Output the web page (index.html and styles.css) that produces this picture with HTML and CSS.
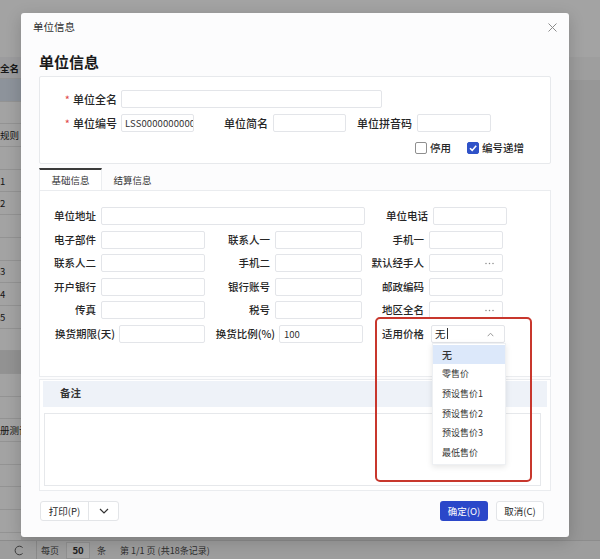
FILE: index.html
```html
<!DOCTYPE html>
<html lang="zh-CN">
<head>
<meta charset="utf-8">
<title>单位信息</title>
<link rel="stylesheet" href="styles.css">
</head>
<body>
<div class="page">
  <div class="toolbar"></div>
  <div class="table">
    <div class="fixed-col">
      <div class="th"><span class="cell">全名</span></div>
      <div class="tr sel"></div>
      <div class="tr"></div>
      <div class="tr"><span class="cell">规则</span></div>
      <div class="tr"></div>
      <div class="tr"><span class="cell">1</span></div>
      <div class="tr"><span class="cell">2</span></div>
      <div class="tr"></div>
      <div class="tr"></div>
      <div class="tr"><span class="cell">3</span></div>
      <div class="tr"><span class="cell">4</span></div>
      <div class="tr"><span class="cell">5</span></div>
      <div class="tr"></div>
      <div class="tr hover"></div>
      <div class="tr"></div>
      <div class="tr"></div>
      <div class="tr"><span class="cell">册测试</span></div>
      <div class="tr"></div>
      <div class="tr"></div>
      <div class="tr"></div>
      <div class="tr"></div>
    </div>
    <div class="rest"><div class="rest-head"></div></div>
  </div>
  <div class="pager">
    <svg class="refresh" width="10" height="11" viewBox="0 0 10 11"><path d="M8.6 2.6A4.3 4.3 0 1 0 8.6 8.4" fill="none" stroke="#5a5a5a" stroke-width="1"/></svg>
    <span class="pg-sep"></span>
    <span class="pg-text">每页</span>
    <span class="pg-size">50</span>
    <span class="pg-text pg-unit">条</span>
    <span class="pg-info">第 1/1 页 (共18条记录)</span>
  </div>
</div>

<div class="mask"></div>

<div class="dialog">
  <div class="dlg-head">
    <span class="dlg-title">单位信息</span>
    <svg class="close" width="9" height="9" viewBox="0 0 9 9"><path d="M0.5 0.5L8.5 8.5M8.5 0.5L0.5 8.5" stroke="#8c8c8c" stroke-width="1"/></svg>
  </div>
  <div class="dlg-body">
    <h1 class="heading">单位信息</h1>

    <div class="card">
      <div class="crow">
        <label class="lb big w77 tight"><span class="req">*</span>单位全名</label>
        <div class="inp w261"></div>
      </div>
      <div class="crow">
        <label class="lb big w77 tight"><span class="req">*</span>单位编号</label>
        <div class="inp w73 code">LSS0000000000</div>
        <label class="lb big w74">单位简名</label>
        <div class="inp w73"></div>
        <label class="lb big w66">单位拼音码</label>
        <div class="inp w74"></div>
      </div>
      <div class="checks">
        <span class="chk"><span class="box"></span>停用</span>
        <span class="chk"><span class="box on"><svg width="10" height="10" viewBox="0 0 10 10"><path d="M2 5.2L4.2 7.4L8.2 2.8" fill="none" stroke="#fff" stroke-width="1.6"/></svg></span>编号递增</span>
      </div>
    </div>

    <div class="tabs">
      <div class="tab active">基础信息</div>
      <div class="tab t2">结算信息</div>
    </div>

    <div class="panel">
      <div class="frow">
        <label class="lb w56">单位地址</label>
        <div class="inp w264"></div>
        <label class="lb w63">单位电话</label>
        <div class="inp w74"></div>
      </div>
      <div class="frow">
        <label class="lb w56">电子部件</label>
        <div class="inp w104"></div>
        <label class="lb w65">联系人一</label>
        <div class="inp w87"></div>
        <label class="lb w62">手机一</label>
        <div class="inp w74"></div>
      </div>
      <div class="frow">
        <label class="lb w56">联系人二</label>
        <div class="inp w104"></div>
        <label class="lb w65">手机二</label>
        <div class="inp w87"></div>
        <label class="lb w62">默认经手人</label>
        <div class="inp w74 pick"><svg class="dots" width="9" height="3" viewBox="0 0 9 3"><circle cx="1" cy="1.5" r="0.75" fill="#8a8a8a"/><circle cx="4.5" cy="1.5" r="0.75" fill="#8a8a8a"/><circle cx="8" cy="1.5" r="0.75" fill="#8a8a8a"/></svg></div>
      </div>
      <div class="frow">
        <label class="lb w56">开户银行</label>
        <div class="inp w104"></div>
        <label class="lb w65">银行账号</label>
        <div class="inp w87"></div>
        <label class="lb w62">邮政编码</label>
        <div class="inp w74"></div>
      </div>
      <div class="frow">
        <label class="lb w56">传真</label>
        <div class="inp w104"></div>
        <label class="lb w65">税号</label>
        <div class="inp w87"></div>
        <label class="lb w62">地区全名</label>
        <div class="inp w74 pick"><svg class="dots" width="9" height="3" viewBox="0 0 9 3"><circle cx="1" cy="1.5" r="0.75" fill="#8a8a8a"/><circle cx="4.5" cy="1.5" r="0.75" fill="#8a8a8a"/><circle cx="8" cy="1.5" r="0.75" fill="#8a8a8a"/></svg></div>
      </div>
      <div class="frow">
        <label class="lb w75 tight">换货期限(天)</label>
        <div class="inp w86"></div>
        <label class="lb w70 tight">换货比例(%)</label>
        <div class="inp w84 num">100</div>
        <label class="lb w61 wide">适用价格</label>
        <div class="select w74">
          <span class="sel-val">无</span><span class="caret-line"></span>
          <svg class="chev" width="7" height="5" viewBox="0 0 7 5"><path d="M0.7 4.2L3.5 1.2L6.3 4.2" fill="none" stroke="#9a9a9a" stroke-width="1"/></svg>
          <div class="menu">
            <div class="mi on">无</div>
            <div class="mi">零售价</div>
            <div class="mi">预设售价1</div>
            <div class="mi">预设售价2</div>
            <div class="mi">预设售价3</div>
            <div class="mi">最低售价</div>
          </div>
        </div>
      </div>
    </div>

    <div class="remark">
      <div class="remark-head">备注</div>
      <div class="remark-area"></div>
    </div>

    <div class="foot">
      <div class="btn-group">
        <span class="btn print">打印(P)</span>
        <span class="btn more"><svg width="10" height="6" viewBox="0 0 10 6"><path d="M1 1L5 5L9 1" fill="none" stroke="#333" stroke-width="1.2"/></svg></span>
      </div>
      <div class="actions">
        <span class="btn ok">确定(O)</span>
        <span class="btn cancel">取消(C)</span>
      </div>
    </div>
  </div>
  <div class="annot"></div>
</div>
</body>
</html>
```

FILE: styles.css
```css
* { box-sizing: border-box; margin: 0; padding: 0; }
html, body { width: 600px; height: 559px; overflow: hidden; }
body {
  position: relative;
  background: #fff;
  color: #262626;
  font-family: "Noto Sans CJK SC", "Noto Sans", sans-serif;
  font-size: 11px;
}

/* ---------- underlying page ---------- */
.page {
  display: grid;
  grid-template-rows: 57px 1fr 19px;
  height: 559px;
}
.toolbar { background: #fff; }
.table { display: flex; min-height: 0; overflow: hidden; }
.fixed-col {
  width: 21px;
  display: flex;
  flex-direction: column;
  background: #fff;
  flex: none;
}
.th {
  height: 22px;
  flex: none;
  background: #f4f5f7;
  display: flex;
  align-items: center;
  font-weight: 700;
  font-size: 9.5px;
  border-bottom: 1px solid #e3e3e3;
}
.tr {
  height: 22.7px;
  flex: none;
  display: flex;
  align-items: center;
  font-size: 9.5px;
  border-bottom: 1px solid #e6e6e6;
}
.tr.sel { background: #dde6f3; }
.tr.hover { background: #e4e4e4; }
.cell { white-space: nowrap; line-height: 12px; }
.rest { flex: 1; background: #ececec; }
.rest-head { height: 23px; background: #f7f7f7; }

.pager {
  display: flex;
  align-items: center;
  padding-left: 14px;
  background: #f6f6f6;
  border-top: 1px solid #dcdcdc;
  font-size: 9px;
  color: #4a4a4a;
}
.refresh { flex: none; }
.pg-sep { width: 1px; height: 19px; background: #d8d8d8; margin-left: 12px; }
.pg-text { margin-left: 4px; }
.pg-size {
  margin-left: 7px;
  width: 24px;
  height: 17px;
  background: #fff;
  border: 1px solid #e2e2e2;
  text-align: center;
  line-height: 15px;
  font-weight: 700;
  font-size: 9.5px;
  color: #333;
}
.pg-unit { margin-left: 7px; }
.pg-info { margin-left: 14px; }

.mask {
  position: absolute;
  inset: 0;
  background: rgba(0, 0, 0, 0.36);
}

/* ---------- dialog ---------- */
.dialog {
  position: absolute;
  left: 21px;
  top: 13px;
  width: 548px;
  height: 524px;
  background: #fcfcfd;
  border-radius: 3px;
  box-shadow: 0 4px 16px rgba(0, 0, 0, 0.18);
  display: flex;
  flex-direction: column;
}
.dlg-head {
  height: 26px;
  padding: 0 12px;
  display: flex;
  align-items: center;
  justify-content: space-between;
  flex: none;
}
.dlg-title { font-size: 10.5px; color: #333; }
.close { margin-top: 3px; }

.dlg-body {
  flex: 1;
  padding: 0 18px;
  display: flex;
  flex-direction: column;
}
.heading {
  font-size: 15px;
  font-weight: 700;
  line-height: 22px;
  margin-top: 12px;
  color: #1a1a1a;
}

.card {
  margin-top: 3px;
  height: 88px;
  border: 1px solid #e7e9ec;
  border-radius: 2px;
  background: #fff;
  padding-top: 13px;
  flex: none;
}
.crow {
  display: flex;
  align-items: center;
  height: 18px;
}
.crow + .crow { margin-top: 6px; }

.lb {
  flex: none;
  text-align: right;
  white-space: nowrap;
  font-size: 10.5px;
  font-weight: 500;
  line-height: 18px;
  margin-right: 5px;
  color: #262626;
}
.lb.big { font-size: 11px; }
.lb.tight { margin-right: 4px; }
.lb.wide { margin-right: 7px; }
.req { color: #e04646; margin-right: 3px; font-weight: 400; }

.inp {
  flex: none;
  height: 18px;
  border: 1px solid #e3e5e9;
  border-radius: 2px;
  background: #fff;
  overflow: hidden;
  white-space: nowrap;
  font-size: 9.5px;
  line-height: 16px;
  padding-left: 3px;
  color: #333;
}
.inp.code { font-size: 9.5px; letter-spacing: 0.1px; }
.inp.num { padding-left: 4px; }
.inp.pick { display: flex; justify-content: flex-end; align-items: center; padding-right: 8px; }
.dots { flex: none; }

.w56 { width: 56px; }
.w61 { width: 61px; }
.w62 { width: 62px; }
.w63 { width: 63px; }
.w65 { width: 65px; }
.w66 { width: 66px; }
.w70 { width: 70px; }
.w73 { width: 73px; }
.w74 { width: 74px; }
.w75 { width: 75px; }
.w77 { width: 77px; }
.w84 { width: 84px; }
.w86 { width: 86px; }
.w87 { width: 87px; }
.w104 { width: 104px; }
.w261 { width: 261px; }
.w264 { width: 264px; }

.checks {
  margin-top: 10px;
  height: 12px;
  display: flex;
  justify-content: flex-end;
  align-items: center;
  gap: 16px;
  padding-right: 26px;
}
.chk {
  display: flex;
  align-items: center;
  gap: 3px;
  font-size: 10.5px;
  font-weight: 500;
  line-height: 12px;
}
.box {
  width: 12px;
  height: 12px;
  border: 1px solid #8f8f8f;
  border-radius: 2px;
  background: #fff;
  display: flex;
  align-items: center;
  justify-content: center;
}
.box.on { background: #2f52c8; border-color: #2f52c8; }

.tabs {
  height: 26px;
  padding-top: 4px;
  display: flex;
  flex: none;
}
.tab {
  width: 63px;
  height: 22px;
  text-align: center;
  font-size: 9.5px;
  line-height: 20px;
  color: #333;
  border-top: 2px solid transparent;
}
.tab.active {
  background: #fff;
  border-top-color: #3b3b3b;
  border-left: 1px solid #ebedf0;
  border-right: 1px solid #ebedf0;
}
.tab.t2 { width: 61px; }

.panel {
  height: 187px;
  border: 1px solid #eaecef;
  background: #fff;
  padding-top: 16px;
  display: flex;
  flex-direction: column;
  gap: 5.5px;
  flex: none;
}
.frow {
  display: flex;
  align-items: center;
  height: 18px;
}

.select {
  position: relative;
  flex: none;
  height: 18px;
  border: 1px solid #e3e5e9;
  border-radius: 2px;
  background: #fff;
  display: flex;
  align-items: center;
  padding-left: 3px;
}
.sel-val { font-size: 10.5px; line-height: 16px; color: #222; }
.caret-line { width: 1px; height: 11px; background: #333; margin-left: 1px; }
.chev { position: absolute; right: 10px; top: 6px; }
.menu {
  position: absolute;
  top: calc(100% + 1px);
  left: 0;
  width: 74px;
  background: #fff;
  border: 1px solid #eef0f3;
  box-shadow: 0 2px 6px rgba(0, 0, 0, 0.1);
  padding: 1px 0 1px;
  z-index: 5;
}
.mi {
  height: 19.7px;
  line-height: 19.7px;
  padding-left: 9px;
  font-size: 9px;
  color: #333;
  white-space: nowrap;
}
.mi.on { background: #dce8fa; font-size: 10px; font-weight: 500; }

.remark {
  margin-top: 2px;
  height: 112px;
  border: 1px solid #eaecef;
  background: #fff;
  padding: 1px 3px 0 3px;
  flex: none;
}
.remark-head {
  height: 26px;
  background: #eef2f8;
  font-size: 10.5px;
  font-weight: 700;
  line-height: 23px;
  padding-left: 17px;
  color: #333;
}
.remark-area {
  margin: 6px 6px 0 1px;
  height: 73px;
  border: 1px solid #e6e8eb;
  background: #fff;
}

.foot {
  margin-top: 10px;
  height: 20px;
  display: flex;
  justify-content: space-between;
  padding: 0 7px 0 1px;
  flex: none;
}
.btn-group {
  display: flex;
  border: 1px solid #e3e5e8;
  border-radius: 3px;
  background: #fff;
}
.btn {
  height: 20px;
  display: flex;
  align-items: center;
  justify-content: center;
  font-size: 9.5px;
  color: #262626;
}
.btn-group .btn { height: 18px; }
.print { width: 47px; }
.more { width: 30px; border-left: 1px solid #e3e5e8; }
.actions { display: flex; gap: 8px; }
.ok {
  width: 48px;
  background: #2b47c9;
  color: #fff;
  border-radius: 3px;
}
.cancel {
  width: 48px;
  background: #fff;
  border: 1px solid #e3e5e8;
  border-radius: 3px;
}

.annot {
  position: absolute;
  left: 354px;
  top: 304px;
  width: 157px;
  height: 165px;
  border: 2px solid #c8372d;
  border-radius: 5px;
  z-index: 6;
  pointer-events: none;
}
```
